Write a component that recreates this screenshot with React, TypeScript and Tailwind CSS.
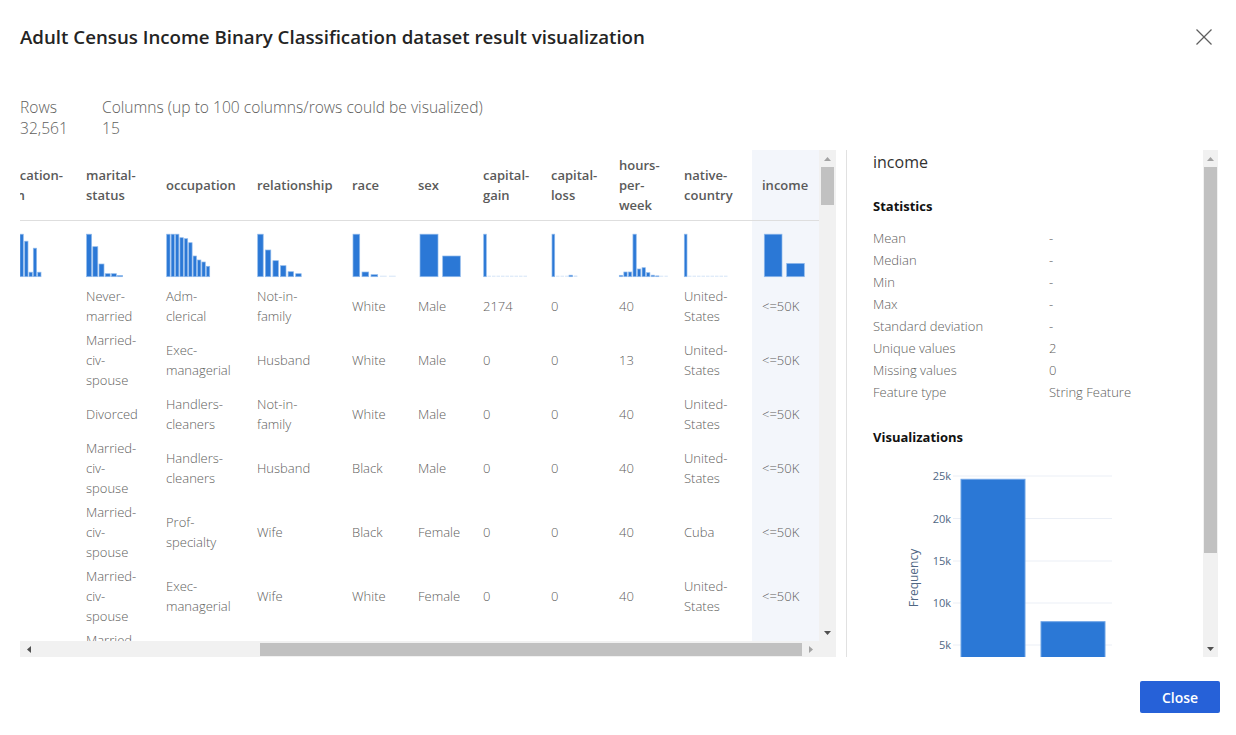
import React from "react";

type Bar = [number, number, number, number?];

const BLUE = "#2b78d6";

function Hist({ bars, width }: { bars: Bar[]; width: number }) {
  return (
    <svg width={width} height={43} className="block overflow-visible">
      {bars.map(([x, w, h, f], i) => (
        <rect
          key={i}
          x={x}
          y={42.7 - h}
          width={w}
          height={h}
          fill={f ? "#d5e4f7" : BLUE}
          stroke={f ? "none" : "#8fb9ec"}
          strokeWidth={f ? 0 : 0.7}
        />
      ))}
    </svg>
  );
}

type Col = { w: string; px: number; head: string[]; hist: Bar[]; hi?: boolean };

const range = (n: number, x0: number, step: number, w: number, hs: number[], faint = false): Bar[] =>
  Array.from({ length: n }, (_, i) => [x0 + i * step, w, hs[i] ?? 1, faint ? 1 : undefined] as Bar);

const cols: Col[] = [
  {
    w: "w-[90px]",
    px: 90,
    head: ["education-", "num"],
    hist: [
      [2, 3.3, 6],
      [6.5, 3.3, 10],
      [11, 3.3, 9],
      [15.3, 3.3, 16],
      [19.6, 3.3, 22],
      [24, 3.3, 42.5],
      [28.7, 3.3, 35.5],
      [33, 3.3, 4.5],
      [37.3, 3.3, 28.5],
      [41.7, 3.3, 4.5],
    ],
  },
  {
    w: "w-[80px]",
    px: 80,
    head: ["marital-", "status"],
    hist: range(6, 0.6, 6.2, 5, [42.5, 30, 12.7, 3, 3, 1.2]),
  },
  {
    w: "w-[91px]",
    px: 91,
    head: ["occupation"],
    hist: range(10, 0.7, 4.4, 3.4, [42.5, 42.5, 42.5, 39, 38, 34, 20.7, 16.7, 14.7, 10.4]),
  },
  {
    w: "w-[95px]",
    px: 95,
    head: ["relationship"],
    hist: range(6, 0.7, 7.6, 5.5, [42.5, 26.7, 16, 11, 5, 3]),
  },
  {
    w: "w-[66px]",
    px: 66,
    head: ["race"],
    hist: [[1, 6.7, 42.5], [10, 6.7, 4.7], [19, 6.7, 2], [28, 6.7, 1, 1], [37, 6.7, 1, 1]],
  },
  {
    w: "w-[65px]",
    px: 65,
    head: ["sex"],
    hist: [[2, 18, 42.5], [24.7, 17.6, 20.7]],
  },
  {
    w: "w-[68px]",
    px: 68,
    head: ["capital-", "gain"],
    hist: [[0.7, 2.6, 42.5], ...range(9, 4.5, 4.5, 3.5, [], true)],
  },
  {
    w: "w-[68px]",
    px: 68,
    head: ["capital-", "loss"],
    hist: [[1, 2.7, 42.5], ...range(5, 5, 4.5, 3.5, [], true), [18, 3.5, 1.5], [22.5, 3.5, 1, 1]],
  },
  {
    w: "w-[65px]",
    px: 65,
    head: ["hours-", "per-", "week"],
    hist: [
      ...range(9, 0.3, 4.55, 3.3, [1.4, 4.7, 4.7, 42.5, 7.7, 9, 4, 1.5, 0.8]),
      ...range(2, 41, 4.5, 3.3, [], true),
    ],
  },
  {
    w: "w-[78px]",
    px: 78,
    head: ["native-", "country"],
    hist: [[0.3, 2.7, 42.5], ...range(9, 4, 4.5, 3.5, [], true)],
  },
  {
    w: "w-[67px]",
    px: 67,
    head: ["income"],
    hist: [[2.3, 17.7, 42.5], [24.7, 17.6, 13.3]],
    hi: true,
  },
];

type Cell = string | string[];
const MCS = ["Married-", "civ-", "spouse"];
const US = ["United-", "States"];
const rows: Cell[][] = [
  ["13", ["Never-", "married"], ["Adm-", "clerical"], ["Not-in-", "family"], "White", "Male", "2174", "0", "40", US, "<=50K"],
  ["13", MCS, ["Exec-", "managerial"], "Husband", "White", "Male", "0", "0", "13", US, "<=50K"],
  ["9", "Divorced", ["Handlers-", "cleaners"], ["Not-in-", "family"], "White", "Male", "0", "0", "40", US, "<=50K"],
  ["7", MCS, ["Handlers-", "cleaners"], "Husband", "Black", "Male", "0", "0", "40", US, "<=50K"],
  ["13", MCS, ["Prof-", "specialty"], "Wife", "Black", "Female", "0", "0", "40", "Cuba", "<=50K"],
  ["14", MCS, ["Exec-", "managerial"], "Wife", "White", "Female", "0", "0", "40", US, "<=50K"],
  ["5", MCS, ["Other-", "service"], ["Not-in-", "family"], "Black", "Female", "0", "0", "16", "Jamaica", "<=50K"],
];

function Tri({ dir, dark }: { dir: "up" | "down" | "left" | "right"; dark?: boolean }) {
  const c = dark ? "#505050" : "#a3a3a3";
  const pts =
    dir === "up"
      ? "0,4 3.5,0 7,4"
      : dir === "down"
      ? "0,0 7,0 3.5,4"
      : dir === "left"
      ? "4,0 4,7 0,3.5"
      : "0,0 0,7 4,3.5";
  const w = dir === "up" || dir === "down" ? 7 : 4;
  const h = dir === "up" || dir === "down" ? 4 : 7;
  return (
    <svg width={w} height={h} className="block">
      <polygon points={pts} fill={c} />
    </svg>
  );
}

const stats: [string, string][] = [
  ["Mean", "-"],
  ["Median", "-"],
  ["Min", "-"],
  ["Max", "-"],
  ["Standard deviation", "-"],
  ["Unique values", "2"],
  ["Missing values", "0"],
  ["Feature type", "String Feature"],
];

function Chart() {
  const grid = [
    [21, "25k"],
    [63.5, "20k"],
    [106, "15k"],
    [148, "10k"],
    [190, "5k"],
  ] as [number, string][];
  return (
    <svg width={330} height={210} className="block">
      {grid.map(([y, t]) => (
        <g key={t}>
          <line x1={80} x2={239} y1={y} y2={y} stroke="#ebeff6" strokeWidth={1} />
          <text
            x={78}
            y={y + 4}
            textAnchor="end"
            fontSize={11}
            fill="#506784"
            fontFamily="'Open Sans', sans-serif"
          >
            {t}
          </text>
        </g>
      ))}
      <rect x={88} y={24.3} width={64} height={200} fill={BLUE} stroke="#6da3e6" strokeWidth={1} />
      <rect x={168} y={166.7} width={64} height={60} fill={BLUE} stroke="#6da3e6" strokeWidth={1} />
      <text
        x={45}
        y={123}
        transform="rotate(-90 45 123)"
        textAnchor="middle"
        fontSize={12}
        fill="#506784"
        fontFamily="'Open Sans', sans-serif"
      >
        Frequency
      </text>
    </svg>
  );
}

export default function App() {
  return (
    <div className="w-[1236px] h-[735px] bg-white flex flex-col font-['Open_Sans',sans-serif] overflow-hidden">
      {/* Title */}
      <div className="h-[74px] flex items-center justify-between pl-5 pr-[23px] shrink-0">
        <h1 className="text-[18.7px] font-semibold text-[#242424] leading-[28px]">
          Adult Census Income Binary Classification dataset result visualization
        </h1>
        <svg width={18} height={18} className="block">
          <line x1={1.5} y1={1.5} x2={16.5} y2={16.5} stroke="#5f5f5f" strokeWidth={1.3} />
          <line x1={16.5} y1={1.5} x2={1.5} y2={16.5} stroke="#5f5f5f" strokeWidth={1.3} />
        </svg>
      </div>

      {/* Summary */}
      <div className="h-[76px] shrink-0 pl-5 pt-[23px] flex text-[15.6px] leading-[21px] text-[#605e5c] font-light">
        <div className="w-[82px]">
          <div>Rows</div>
          <div>32,561</div>
        </div>
        <div>
          <div>Columns (up to 100 columns/rows could be visualized)</div>
          <div>15</div>
        </div>
      </div>

      {/* Main */}
      <div className="h-[507px] shrink-0 flex pl-5">
        {/* Table block */}
        <div className="w-[816px] flex flex-col">
          <div className="flex h-[491px]">
            <div className="w-[799px] overflow-hidden">
              <div className="-ml-[34px] w-max">
                {/* header */}
                <div className="flex h-[71px] border-b border-[#dedede]">
                  {cols.map((c, j) => (
                    <div
                      key={j}
                      className={`${c.w} shrink-0 pl-[10px] flex items-center text-[13px] font-semibold text-[#5a5a5a] leading-[20px] ${
                        c.hi ? "bg-[#f3f6fb]" : ""
                      }`}
                    >
                      <div>
                        {c.head.map((l, k) => (
                          <div key={k}>{l}</div>
                        ))}
                      </div>
                    </div>
                  ))}
                </div>
                {/* hist row */}
                <div className="flex">
                  {cols.map((c, j) => (
                    <div
                      key={j}
                      className={`${c.w} shrink-0 pl-[10px] pt-[13px] pb-[7px] ${c.hi ? "bg-[#f3f6fb]" : ""}`}
                    >
                      <Hist bars={c.hist} width={c.px - 10} />
                    </div>
                  ))}
                </div>
                {/* data rows */}
                {rows.map((r, i) => (
                  <div key={i} className="flex">
                    {r.map((cell, j) => (
                      <div
                        key={j}
                        className={`${cols[j].w} shrink-0 pl-[10px] py-[2px] flex items-center text-[13px] font-light text-[#605e5c] leading-[20px] whitespace-nowrap ${
                          cols[j].hi ? "bg-[#f3f6fb]" : ""
                        }`}
                      >
                        <div>
                          {(Array.isArray(cell) ? cell : [cell]).map((l, k) => (
                            <div key={k}>{l}</div>
                          ))}
                        </div>
                      </div>
                    ))}
                  </div>
                ))}
              </div>
            </div>
            {/* vertical scrollbar */}
            <div className="w-[17px] bg-[#f1f1f1] flex flex-col items-center">
              <div className="h-[17px] flex items-center justify-center">
                <Tri dir="up" />
              </div>
              <div className="w-[13px] h-[38px] bg-[#c1c1c1]" />
              <div className="flex-1" />
              <div className="h-[17px] flex items-center justify-center">
                <Tri dir="down" dark />
              </div>
            </div>
          </div>
          {/* horizontal scrollbar */}
          <div className="flex h-[16px]">
            <div className="flex-1 bg-[#f1f1f1] flex items-center">
              <div className="w-[17px] flex justify-center">
                <Tri dir="left" dark />
              </div>
              <div className="w-[223px]" />
              <div className="w-[542px] h-[13px] bg-[#c1c1c1]" />
              <div className="w-[17px] flex justify-center">
                <Tri dir="right" />
              </div>
            </div>
            <div className="w-[17px] bg-[#f1f1f1]" />
          </div>
        </div>

        {/* Right panel */}
        <div className="ml-[10px] w-[372px] flex border-l border-[#e1e1e1]">
          <div className="flex-1 overflow-hidden pl-[26px]">
            <div className="text-[16px] leading-[24px] text-[#323130]">income</div>
            <div className="mt-[22px] text-[13px] leading-[20px] font-bold text-[#111]">Statistics</div>
            <div className="mt-[11px] text-[13px] leading-[22px] text-[#605e5c] font-light">
              {stats.map(([k, v]) => (
                <div key={k} className="flex">
                  <div className="w-[176px]">{k}</div>
                  <div>{v}</div>
                </div>
              ))}
            </div>
            <div className="mt-[24px] text-[13px] leading-[20px] font-bold text-[#111]">Visualizations</div>
            <div className="mt-[8px]">
              <Chart />
            </div>
          </div>
          <div className="w-[15px] bg-[#f1f1f1] flex flex-col items-center">
            <div className="h-[17px] flex items-center justify-center">
              <Tri dir="up" />
            </div>
            <div className="w-[13px] h-[386px] bg-[#c1c1c1]" />
            <div className="flex-1" />
            <div className="h-[17px] flex items-center justify-center">
              <Tri dir="down" dark />
            </div>
          </div>
        </div>
      </div>

      {/* Footer */}
      <div className="flex justify-end pr-4 mt-[24px]">
        <button className="w-[80px] h-[32px] rounded-[2px] bg-[#2661d8] text-white text-[14px] font-semibold">
          Close
        </button>
      </div>
    </div>
  );
}
